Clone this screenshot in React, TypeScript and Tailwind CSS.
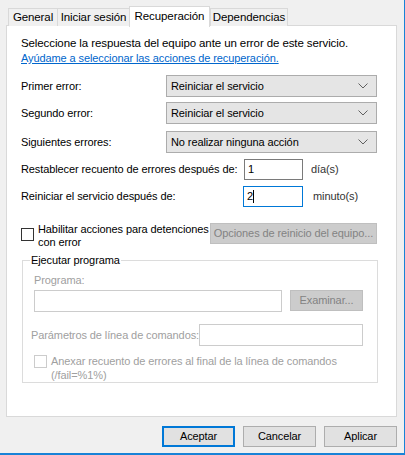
import React from "react";

const Chevron = () => (
  <svg width="10" height="6" viewBox="0 0 10 6" className="shrink-0">
    <path d="M0.5 0.5 L5 5 L9.5 0.5" fill="none" stroke="#606060" strokeWidth="1" />
  </svg>
);

const Select = ({ value }: { value: string }) => (
  <div className="ml-auto w-[211px] h-[22px] bg-[#e5e5e5] border border-[#acacac] flex items-center pl-[4px] pr-[8px]">
    <span className="flex-1">{value}</span>
    <Chevron />
  </div>
);

const Tab = ({ label, selected, w }: { label: string; selected?: boolean; w: string }) =>
  selected ? (
    <div className={`${w} h-[21px] bg-white border border-b-0 border-[#d9d9d9] flex items-start justify-center pt-[2px] relative z-10 -mb-px`}>
      {label}
    </div>
  ) : (
    <div className={`${w} h-[18px] bg-[#f0f0f0] border border-b-0 border-[#d9d9d9] -mr-px flex items-center justify-center`}>
      {label}
    </div>
  );

export default function App() {
  return (
    <div
      className="w-[405px] h-[455px] bg-[#f0f0f0] border-r border-b-2 border-[#1883d7] text-[11px] tracking-[-0.1px] leading-[15px] text-black overflow-hidden whitespace-nowrap"
      style={{ fontFamily: '"Liberation Sans", Arial, sans-serif' }}
    >
      {/* tabs */}
      <div className="flex items-end pl-[8px] h-[26px] text-[11.5px]">
        <Tab label="General" w="w-[50px]" />
        <Tab label="Iniciar sesión" w="w-[73px]" />
        <Tab label="Recuperación" w="w-[81px]" selected />
        <Tab label="Dependencias" w="w-[78px]" />
      </div>
      {/* panel */}
      <div className="ml-[6px] w-[391px] h-[392px] -mt-px bg-white border border-[#d9d9d9] pl-[14px] pr-[19px] pt-[10px] flex flex-col">
        <div className="text-[11.5px]">Seleccione la respuesta del equipo ante un error de este servicio.</div>
        <div className="text-[#0066cc] underline">Ayúdame a seleccionar las acciones de recuperación.</div>

        <div className="flex items-center mt-[9px]">
          <span>Primer error:</span>
          <Select value="Reiniciar el servicio" />
        </div>
        <div className="flex items-center mt-[5px]">
          <span>Segundo error:</span>
          <Select value="Reiniciar el servicio" />
        </div>
        <div className="flex items-center mt-[7px]">
          <span>Siguientes errores:</span>
          <Select value="No realizar ninguna acción" />
        </div>

        <div className="flex items-center mt-[6px] h-[21px]">
          <span className="w-[223px]">Restablecer recuento de errores después de:</span>
          <div className="w-[59px] h-[21px] border border-[#7a7a7a] flex items-center pl-[3px]">1</div>
          <span className="ml-[8px] text-[#333]">día(s)</span>
        </div>
        <div className="flex items-center mt-[6px] h-[21px]">
          <span className="w-[222px]">Reiniciar el servicio después de:</span>
          <div className="w-[60px] h-[21px] border border-[#0078d7] flex items-center pl-[3px]">
            2<span className="inline-block w-px h-[13px] bg-black" />
          </div>
          <span className="ml-[10px] text-[#333]">minuto(s)</span>
        </div>

        <div className="flex mt-[16px] h-[21px]">
          <div className="w-[13px] h-[13px] border border-[#333] mt-[5px] bg-white shrink-0" />
          <div className="ml-[4px] w-[170px] leading-[13px]">
            Habilitar acciones para detenciones
            <br />
            con error
          </div>
          <div className="ml-auto w-[167px] h-[21px] bg-[#cccccc] border border-[#bfbfbf] text-[#838383] flex items-center justify-center">
            Opciones de reinicio del equipo...
          </div>
        </div>

        {/* group box */}
        <div className="relative mt-[16px] ml-[1px] w-[356px] h-[123px] border border-[#dcdcdc] pl-[11px] pt-[12px] text-[#a0a0a0]">
          <span className="absolute left-[7px] -top-[8px] bg-white px-[1px] text-black">Ejecutar programa</span>
          <div>Programa:</div>
          <div className="flex mt-[2px]">
            <div className="w-[248px] h-[22px] border border-[#cccccc]" />
            <div className="ml-[8px] w-[73px] h-[21px] bg-[#cccccc] border border-[#bfbfbf] text-[#838383] flex items-center justify-center">
              Examinar...
            </div>
          </div>
          <div className="flex items-center mt-[12px]">
            <span className="w-[168px] -ml-[3px]">Parámetros de línea de comandos:</span>
            <div className="w-[164px] h-[22px] border border-[#cccccc]" />
          </div>
          <div className="flex mt-[9px]">
            <div className="w-[13px] h-[13px] border border-[#cccccc] shrink-0" />
            <div className="ml-[4px] leading-[14px] -mt-[1px]">
              Anexar recuento de errores al final de la línea de comandos
              <br />
              (/fail=%1%)
            </div>
          </div>
        </div>
      </div>

      {/* buttons */}
      <div className="flex justify-end gap-[8px] pr-[7px] mt-[9px]">
        <div className="w-[73px] h-[21px] bg-[#e1e1e1] border-2 border-[#0078d7] flex items-center justify-center">Aceptar</div>
        <div className="w-[73px] h-[21px] bg-[#e1e1e1] border border-[#adadad] flex items-center justify-center">Cancelar</div>
        <div className="w-[73px] h-[21px] bg-[#e1e1e1] border border-[#adadad] flex items-center justify-center">Aplicar</div>
      </div>
    </div>
  );
}
